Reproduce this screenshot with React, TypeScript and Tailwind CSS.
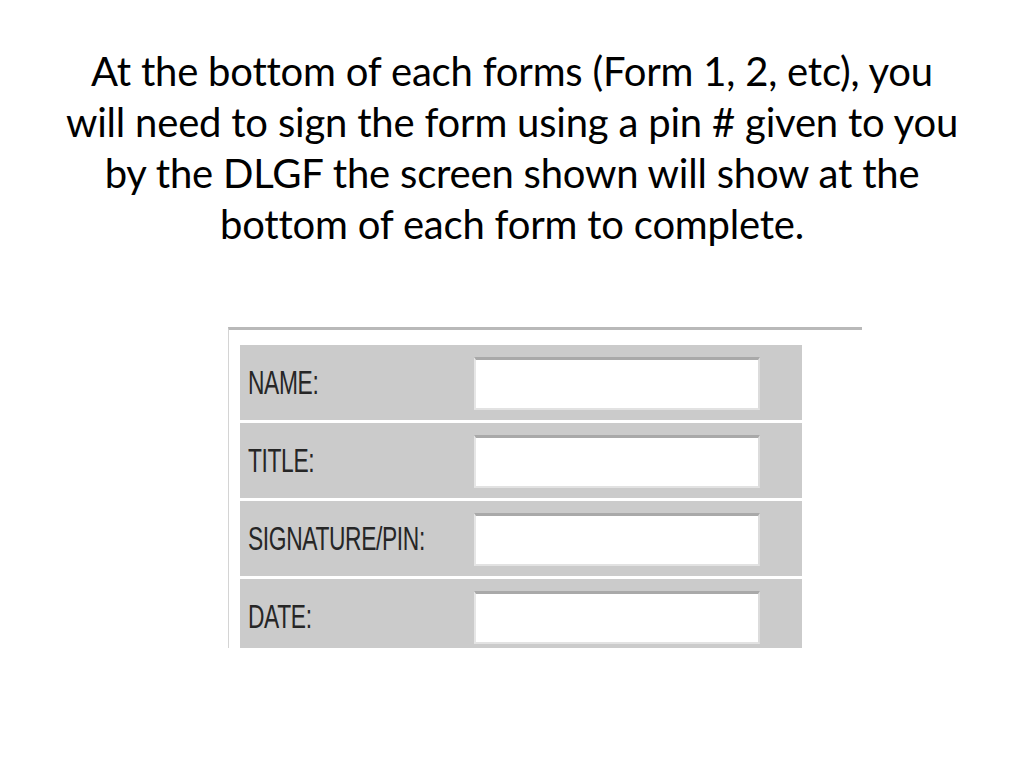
const fields = ['NAME:', 'TITLE:', 'SIGNATURE/PIN:', 'DATE:']

function SignRow({ label }: { label: string }) {
  return (
    <div className="flex h-[75px] shrink-0 items-start bg-[#cbcbcb]">
      <div className="flex h-full w-[234px] items-center pl-[8px]">
        <span className="inline-block origin-left scale-x-[0.69] whitespace-nowrap font-['Liberation_Sans',Arial,sans-serif] text-[33px] leading-none tracking-[-0.5px] text-[#262626]">
          {label}
        </span>
      </div>
      <input
        type="text"
        aria-label={label}
        className="mt-[12px] h-[53px] w-[286px] border-t-[3px] border-r-2 border-b-2 border-l-2 border-t-[#a9a9a9] border-r-[#dcdcdc] border-b-[#e2e2e2] border-l-[#e6e6e6] bg-white outline-none"
      />
    </div>
  )
}

export default function App() {
  return (
    <div className="flex h-[768px] w-[1024px] flex-col overflow-hidden bg-white">
      <h1 className="pt-[46px] text-center font-['Lato','Open_Sans',sans-serif] text-[40px] leading-[51px] font-normal tracking-[-0.2px] text-black">
        At the bottom of each forms (Form 1, 2, etc), you
        <br />
        will need to sign the form using a pin # given to you
        <br />
        by the DLGF the screen shown will show at the
        <br />
        bottom of each form to complete.
      </h1>

      <div className="mt-[77px] ml-[228px] h-[321px] w-[634px] overflow-hidden border-t-[3px] border-l border-t-[#b9b9b9] border-l-[#d4d4d4] pt-[15px] pl-[11px]">
        <div className="flex w-[562px] flex-col gap-[3px]">
          {fields.map((f) => (
            <SignRow key={f} label={f} />
          ))}
        </div>
      </div>
    </div>
  )
}
